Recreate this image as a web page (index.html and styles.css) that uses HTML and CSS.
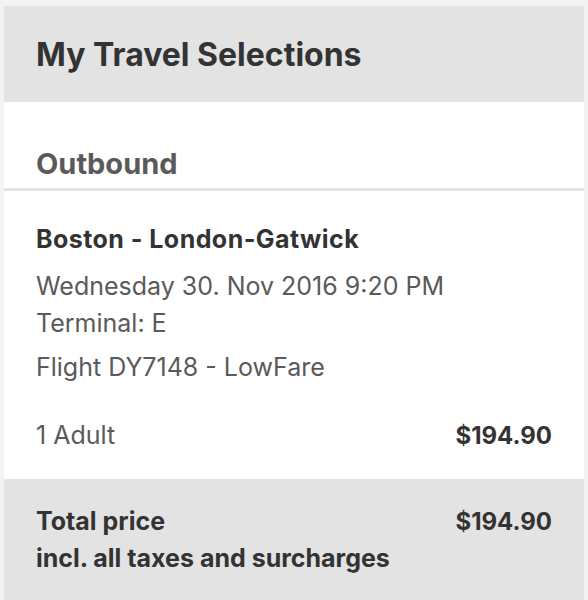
FILE: index.html
```html
<!DOCTYPE html>
<html>
<head>
<meta charset="utf-8">
<link rel="stylesheet" href="styles.css">
</head>
<body>
<div class="card">
  <div class="card-header"><h1 class="title">My Travel Selections</h1></div>
  <div class="section-head"><h2 class="section-title">Outbound</h2></div>
  <div class="leg">
    <div class="route">Boston - London-Gatwick</div>
    <div class="date">Wednesday 30. Nov 2016 9:20 PM</div>
    <div class="terminal">Terminal: E</div>
    <div class="flight">Flight DY7148 - LowFare</div>
    <div class="price-row">
      <span class="pax">1 Adult</span>
      <span class="amount">$194.90</span>
    </div>
  </div>
  <div class="total">
    <div class="total-label">
      <div>Total price</div>
      <div>incl. all taxes and surcharges</div>
    </div>
    <div class="amount">$194.90</div>
  </div>
</div>
</body>
</html>
```

FILE: styles.css
```css
html, body {
  margin: 0;
  padding: 0;
  background: #f3f3f3;
}
body {
  padding: 6px 4px 0 4px;
  font-family: Inter, Lato, sans-serif;
  color: #555;
}
.card {
  width: 580px;
  background: #fff;
}
.card-header {
  background: #e3e3e3;
  height: 96px;
  display: flex;
  align-items: center;
  padding: 0 32px;
}
.title {
  margin: 0;
  font-size: 32px;
  font-weight: 700;
  color: #333;
}
.section-head {
  padding: 0 32px;
  display: flex;
  align-items: flex-end;
  border-bottom: 3px solid #e3e3e3;
  box-sizing: border-box;
  height: 89px;
}
.section-title {
  margin: 0 0 6px 0;
  font-size: 29px;
  font-weight: 700;
  color: #5a5a5a;
  line-height: 36px;
}
.leg {
  padding: 32px 32px 0 32px;
  height: 288px;
  box-sizing: border-box;
  font-size: 25px;
  color: #5a5a5a;
}
.route {
  font-weight: 700;
  color: #333;
  line-height: 32px;
  margin-bottom: 13px;
  letter-spacing: 0.45px;
}
.date, .terminal {
  line-height: 37px;
}
.flight {
  line-height: 37px;
  margin-top: 7px;
}
.price-row {
  margin-top: 31px;
  display: flex;
  justify-content: space-between;
  line-height: 37px;
}
.amount {
  font-weight: 700;
  color: #333;
  font-size: 24px;
}
.total {
  background: #e3e3e3;
  height: 121px;
  padding: 24px 32px 0 32px;
  box-sizing: border-box;
  display: flex;
  justify-content: space-between;
  align-items: flex-start;
  font-size: 25px;
  line-height: 37px;
  font-weight: 700;
  color: #333;
}
```
